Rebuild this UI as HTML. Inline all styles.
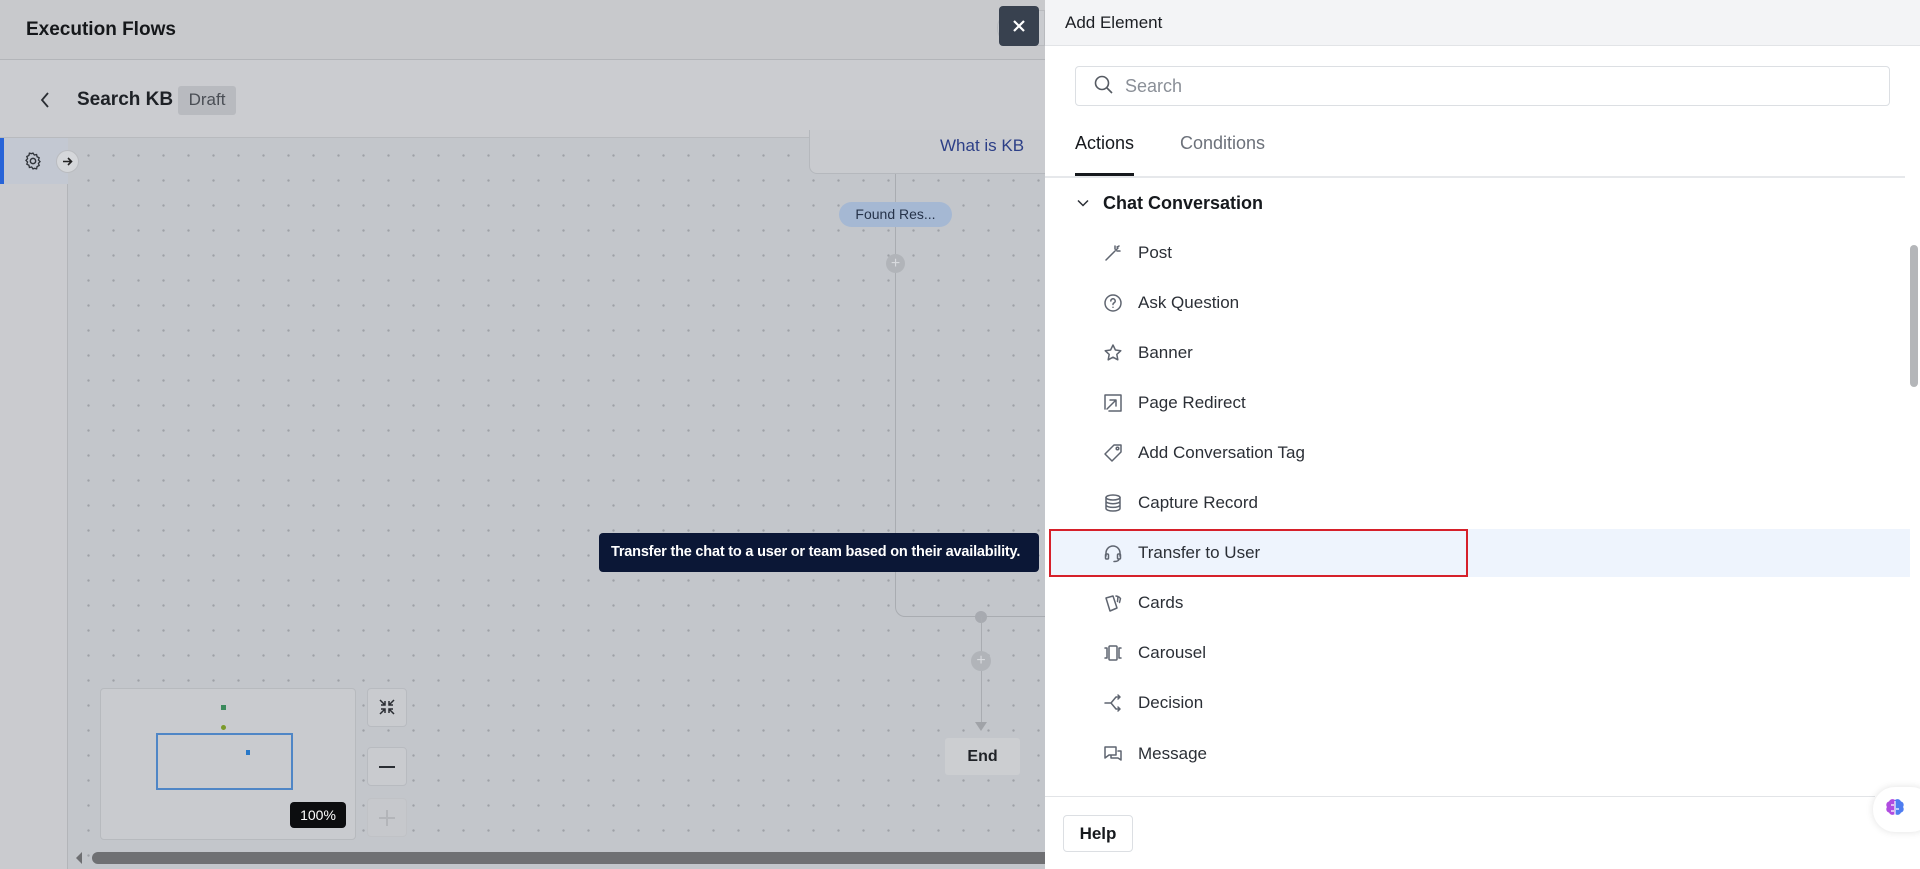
<!DOCTYPE html>
<html><head><meta charset="utf-8"><style>
*{box-sizing:border-box;margin:0;padding:0}
body{width:1920px;height:869px;overflow:hidden;position:relative;font-family:"Liberation Sans",sans-serif;background:#c5c8cc}
.abs{position:absolute}
.hdr{left:0;top:0;width:1045px;height:60px;background:#c8c9cc;border-bottom:1px solid #b3b5b9}
.bar2{left:0;top:60px;width:1045px;height:78px;background:#cbccd0;border-bottom:1px solid #b8babe}
.canvas{left:68px;top:138px;width:977px;height:731px;background-color:#c3c6cb;background-image:linear-gradient(#c3c6cb,#c3c6cb),radial-gradient(circle,#9ea1a7 1px,transparent 1.3px);background-size:0 0,25px 25px;background-position:0 0,8px 5px}
.side{left:0;top:138px;width:68px;height:731px;background:#cacbcf;border-right:1px solid #b3b5b9}
.panel{left:1045px;top:0;width:875px;height:869px;background:#fff}
.item{position:absolute;left:1138px;font-size:17px;color:#2b2f36;transform:translateY(-50%)}
.ic{position:absolute;left:1103px;width:20px;height:20px;transform:translateY(-50%)}
.ic svg{width:20px;height:20px;fill:none;stroke:#5f6570;stroke-width:1.5;stroke-linecap:round;stroke-linejoin:round}
.zb{left:367px;width:40px;height:39px;border:1px solid #b8bbc0;border-radius:4px;background:#c9cbcf}
</style></head><body>
<div class="abs hdr"></div>
<div class="abs" style="left:26px;top:19px;font-size:19px;font-weight:bold;color:#15171a">Execution Flows</div>
<div class="abs bar2"></div>
<svg class="abs" style="left:38px;top:90px" width="14" height="20"><path d="M10 3 L4 10 L10 17" stroke="#2a2d33" stroke-width="1.8" fill="none"/></svg>
<div class="abs" style="left:77px;top:89px;font-size:19px;font-weight:bold;color:#1e2126">Search KB</div>
<div class="abs" style="left:178px;top:86px;width:58px;height:29px;background:#b8babf;border-radius:3px;font-size:17px;color:#4a4e55;text-align:center;line-height:28px">Draft</div>
<div class="abs side"></div>
<div class="abs" style="left:0;top:138px;width:68px;height:46px;background:#c3c8d2;border-left:4px solid #2864d8"></div>
<svg class="abs" style="left:23px;top:151px" width="20" height="20" viewBox="0 0 24 24"><circle cx="12" cy="12" r="3.2" fill="none" stroke="#30343a" stroke-width="1.8"/><path d="M12 2.5l1.6 2.3 2.7-.6.6 2.7 2.5 1.3-.9 2.6 1.9 2-1.9 2 .9 2.6-2.5 1.3-.6 2.7-2.7-.6L12 21.5l-1.6-2.3-2.7.6-.6-2.7-2.5-1.3.9-2.6-1.9-2 1.9-2-.9-2.6 2.5-1.3.6-2.7 2.7.6z" fill="none" stroke="#30343a" stroke-width="1.6"/></svg>
<div class="abs canvas" style="background-image:radial-gradient(circle,#9ea1a7 1px,transparent 1.4px);background-size:25px 25px;background-position:8px 5px"></div>
<div class="abs" style="left:56px;top:150px;width:23px;height:23px;border-radius:50%;background:#d5d7da;border:1px solid #babcc0"></div>
<svg class="abs" style="left:61px;top:155px" width="13" height="13"><path d="M2 6.5h8M7 3l3.5 3.5L7 10" stroke="#222" stroke-width="1.6" fill="none"/></svg>
<!-- flow -->
<div class="abs" style="left:809px;top:130px;width:250px;height:44px;border:1px solid #b5b8bd;border-top:none;border-radius:0 0 8px 8px;background:#c9cbcf"></div>
<div class="abs" style="left:940px;top:136px;font-size:17px;color:#2c3f87">What is KB</div>
<div class="abs" style="left:895px;top:174px;width:1px;height:430px;background:#a9acb1"></div>
<div class="abs" style="left:839px;top:202px;width:113px;height:25px;border-radius:13px;background:#a5b8d3;font-size:14px;color:#26334a;text-align:center;line-height:25px">Found Res...</div>
<div class="abs" style="left:886px;top:254px;width:19px;height:19px;border-radius:50%;background:#b1b4b9;color:#d8dade;text-align:center;line-height:19px;font-size:16px">+</div>
<div class="abs" style="left:895px;top:590px;width:160px;height:27px;border-left:1px solid #a9acb1;border-bottom:1px solid #a9acb1;border-bottom-left-radius:10px"></div>
<div class="abs" style="left:975px;top:611px;width:12px;height:12px;border-radius:50%;background:#a7aab0"></div>
<div class="abs" style="left:981px;top:617px;width:1px;height:110px;background:#a9acb1"></div>
<div class="abs" style="left:971px;top:651px;width:20px;height:20px;border-radius:50%;background:#b1b4b9;color:#d8dade;text-align:center;line-height:20px;font-size:16px">+</div>
<svg class="abs" style="left:975px;top:722px" width="12" height="10"><path d="M0 0h12L6 9z" fill="#a0a3a8"/></svg>
<div class="abs" style="left:945px;top:738px;width:75px;height:37px;background:#ccced1;border-radius:3px;font-size:16px;font-weight:bold;color:#1f2227;text-align:center;line-height:37px">End</div>
<!-- tooltip -->
<div class="abs" style="left:599px;top:533px;width:440px;height:39px;background:#0b1736;border-radius:4px;color:#fff;font-size:14.5px;font-weight:bold;line-height:39px;padding-left:12px;letter-spacing:-0.2px">Transfer the chat to a user or team based on their availability.</div>
<!-- minimap -->
<div class="abs" style="left:100px;top:688px;width:256px;height:152px;border:1px solid #b7babe;border-radius:4px;background:#c9cbcf"></div>
<div class="abs" style="left:221px;top:705px;width:5px;height:5px;background:#3a8a5c"></div>
<div class="abs" style="left:221px;top:725px;width:5px;height:5px;background:#7a9a2a;border-radius:50%"></div>
<div class="abs" style="left:156px;top:733px;width:137px;height:57px;border:2px solid #4f86c6"></div>
<div class="abs" style="left:246px;top:750px;width:4px;height:5px;background:#2878c8"></div>
<div class="abs" style="left:290px;top:802px;width:56px;height:26px;background:#0c0d0f;border-radius:4px;color:#fff;font-size:14px;text-align:center;line-height:26px">100%</div>
<div class="abs zb" style="top:688px"></div>
<svg class="abs" style="left:377px;top:697px" width="20" height="20"><path d="M3 3l5 5M8 4v4H4M17 3l-5 5M12 4v4h4M3 17l5-5M4 12h4v4M17 17l-5-5M16 12h-4v4" stroke="#2a2d33" stroke-width="1.5" fill="none"/></svg>
<div class="abs zb" style="top:747px"></div>
<div class="abs" style="left:379px;top:766px;width:16px;height:2px;background:#2a2d33"></div>
<div class="abs zb" style="top:798px;background:#c6c8cc;border-color:#c0c2c6"></div>
<div class="abs" style="left:379px;top:817px;width:16px;height:1.5px;background:#b3b5b9"></div>
<div class="abs" style="left:386px;top:810px;width:1.5px;height:16px;background:#b3b5b9"></div>
<!-- h scrollbar -->
<svg class="abs" style="left:74px;top:852px" width="10" height="12"><path d="M8 0L2 6l6 6z" fill="#6e6f72"/></svg>
<div class="abs" style="left:92px;top:852px;width:953px;height:12px;background:#6f7073;border-radius:6px 0 0 6px"></div>
<!-- close -->
<div class="abs" style="left:997px;top:10px;width:48px;height:36px;border-radius:18px 0 0 18px;background:#c9cbcf;border:1px solid #b8babe"></div>
<div class="abs" style="left:999px;top:6px;width:40px;height:40px;background:#38414f;border-radius:4px"></div>
<svg class="abs" style="left:1011px;top:18px" width="16" height="16"><path d="M3 3l10 10M13 3L3 13" stroke="#fff" stroke-width="2.2"/></svg>
<!-- panel -->
<div class="abs panel"></div>
<div class="abs" style="left:1045px;top:0;width:875px;height:46px;background:#f3f4f6;border-bottom:1px solid #e2e4e7"></div>
<div class="abs" style="left:1065px;top:13px;font-size:17px;color:#1b1e23">Add Element</div>
<div class="abs" style="left:1075px;top:66px;width:815px;height:40px;border:1px solid #dcdfe3;border-radius:4px"></div>
<svg class="abs" style="left:1093px;top:74px" width="22" height="22"><circle cx="9" cy="9" r="6.5" stroke="#555a62" stroke-width="1.6" fill="none"/><path d="M14 14l5 5" stroke="#555a62" stroke-width="1.6"/></svg>
<div class="abs" style="left:1125px;top:76px;font-size:18px;color:#8a8f97">Search</div>
<div class="abs" style="left:1075px;top:133px;font-size:18px;color:#16191d">Actions</div>
<div class="abs" style="left:1180px;top:133px;font-size:18px;color:#6c717a">Conditions</div>
<div class="abs" style="left:1045px;top:176px;width:860px;height:2px;background:#e6e8eb"></div>
<div class="abs" style="left:1075px;top:173px;width:59px;height:3px;background:#16191d"></div>
<svg class="abs" style="left:1076px;top:196px" width="14" height="14"><path d="M2 4.5l5 5 5-5" stroke="#2b2f36" stroke-width="1.5" fill="none"/></svg>
<div class="abs" style="left:1103px;top:193px;font-size:18px;font-weight:bold;color:#16191d">Chat Conversation</div>
<!-- highlight -->
<div class="abs" style="left:1049px;top:529px;width:861px;height:48px;background:#eef4fd"></div>
<div class="abs" style="left:1049px;top:529px;width:419px;height:48px;border:2px solid #d6202a"></div>
<!-- items -->
<div class="ic" style="top:253px"><svg viewBox="0 0 20 20"><path d="M3 17l9-9M12 3v3M15 5l-2 2M17 8h-3M14 4l2-1"/></svg></div><div class="item" style="top:253px">Post</div>
<div class="ic" style="top:303px"><svg viewBox="0 0 20 20"><circle cx="10" cy="10" r="8"/><path d="M7.8 8a2.2 2.2 0 1 1 3 2c-.7.3-.8.8-.8 1.5M10 14.2v.1"/></svg></div><div class="item" style="top:303px">Ask Question</div>
<div class="ic" style="top:353px"><svg viewBox="0 0 20 20"><path d="M10 2l2.4 5 5.4.7-4 3.7 1 5.4L10 14.2 5.2 16.8l1-5.4-4-3.7 5.4-.7z"/></svg></div><div class="item" style="top:353px">Banner</div>
<div class="ic" style="top:403px"><svg viewBox="0 0 20 20"><path d="M2 2h16v16H6M2 2v14M4 16l9-9M7 7h6v6"/></svg></div><div class="item" style="top:403px">Page Redirect</div>
<div class="ic" style="top:453px"><svg viewBox="0 0 20 20"><path d="M11 2h7v7l-9 9-7-7z"/><circle cx="14.5" cy="5.5" r="1.3"/></svg></div><div class="item" style="top:453px">Add Conversation Tag</div>
<div class="ic" style="top:503px"><svg viewBox="0 0 20 20"><ellipse cx="10" cy="4.5" rx="7" ry="2.5"/><path d="M3 4.5v11c0 1.4 3.1 2.5 7 2.5s7-1.1 7-2.5v-11M3 8.2c0 1.4 3.1 2.5 7 2.5s7-1.1 7-2.5M3 11.9c0 1.4 3.1 2.5 7 2.5s7-1.1 7-2.5"/></svg></div><div class="item" style="top:503px">Capture Record</div>
<div class="ic" style="top:553px"><svg viewBox="0 0 20 20"><path d="M3 13v-3a7 7 0 0 1 14 0v3"/><rect x="2.5" y="11" width="3" height="5" rx="1"/><rect x="14.5" y="11" width="3" height="5" rx="1"/><path d="M16 16c0 1.5-2 2.5-5 2.5"/></svg></div><div class="item" style="top:553px">Transfer to User</div>
<div class="ic" style="top:603px"><svg viewBox="0 0 20 20"><path d="M3 5l7-2 4 12-7 3zM13 3l2 .5-.5 5M16 4l1.5 1.5-1 4"/></svg></div><div class="item" style="top:603px">Cards</div>
<div class="ic" style="top:653px"><svg viewBox="0 0 20 20"><rect x="6" y="3" width="8" height="14" rx="1"/><path d="M2 5h2v10H2M18 5h-2v10h2"/></svg></div><div class="item" style="top:653px">Carousel</div>
<div class="ic" style="top:703px"><svg viewBox="0 0 20 20"><path d="M2 10h6l5-6h4M8 10l5 6h4M15 2l2 2-2 2M15 14l2 2-2 2"/></svg></div><div class="item" style="top:703px">Decision</div>
<div class="ic" style="top:754px"><svg viewBox="0 0 20 20"><path d="M2 3h11v8H6l-4 3zM15 7h3v9l-3-2H8v-3"/></svg></div><div class="item" style="top:754px">Message</div>
<!-- v scrollbar -->
<div class="abs" style="left:1910px;top:245px;width:8px;height:142px;background:#b4b6b9;border-radius:4px"></div>
<!-- footer -->
<div class="abs" style="left:1045px;top:796px;width:830px;height:1px;background:#e2e4e7"></div>
<div class="abs" style="left:1063px;top:815px;width:70px;height:37px;border:1px solid #dcdfe3;border-radius:4px;font-size:17px;font-weight:bold;color:#16191d;text-align:center;line-height:35px">Help</div>
<div class="abs" style="left:1873px;top:787px;width:60px;height:45px;border-radius:22px;background:#fff;box-shadow:0 0 8px rgba(0,0,0,.12)"></div>
<svg class="abs" style="left:1883px;top:797px" width="24" height="24" viewBox="0 0 24 24"><path d="M12 3c-2-1.5-5-1-6 1.5-2.5.5-3.5 3.5-2 5.5-1.5 2 -.5 5 2 5.5 1 2.5 4 3 6 1.5z" fill="#b04ce0"/><path d="M12 3c2-1.5 5-1 6 1.5 2.5.5 3.5 3.5 2 5.5 1.5 2 .5 5-2 5.5-1 2.5-4 3-6 1.5z" fill="#4f7df0"/><path d="M12 4v14M8 8h3M13 12h3M8 14h3" stroke="#fff" stroke-width="1.2"/></svg>
</body></html>
